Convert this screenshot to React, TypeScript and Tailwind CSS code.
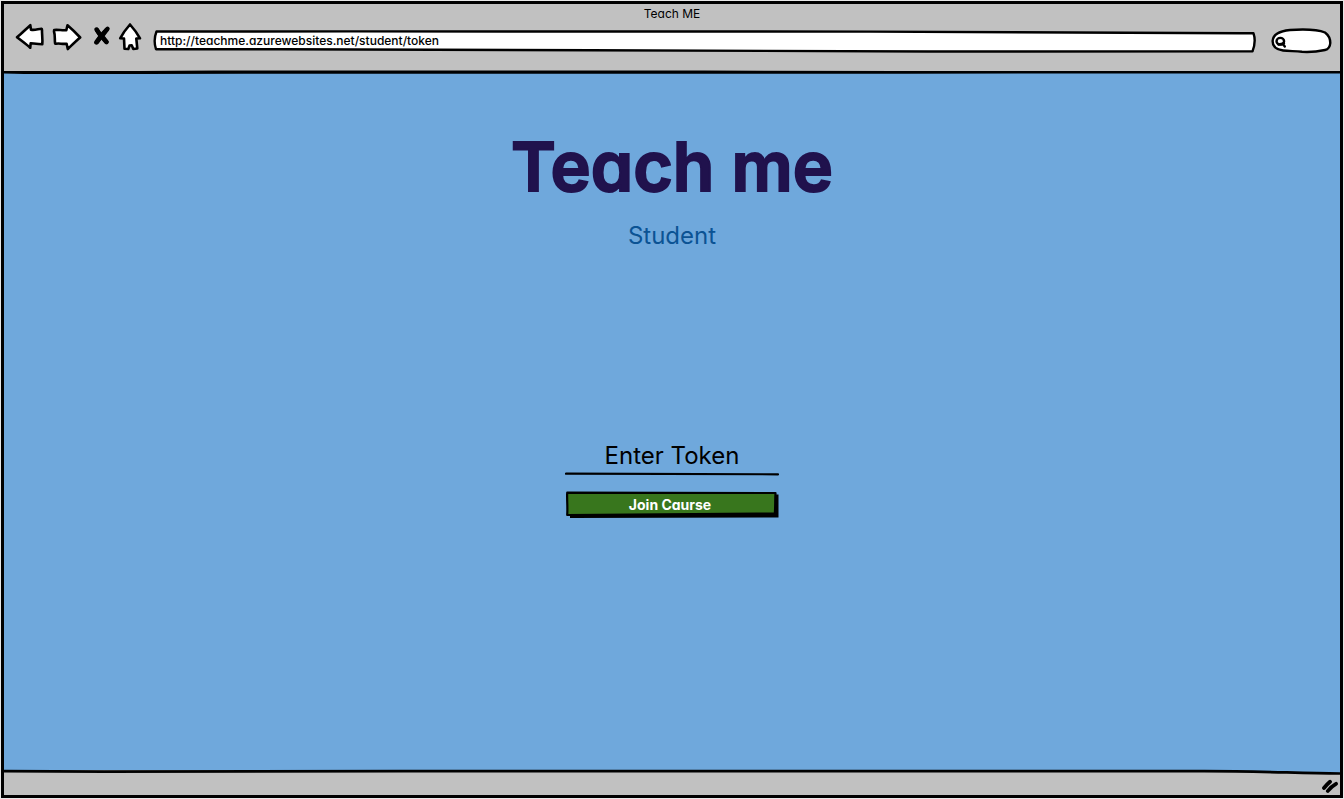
import { useState } from "react";
import type { ReactNode } from "react";

type NavButtonProps = {
  label: string;
  viewBox: string;
  className: string;
  children: ReactNode;
};

function NavButton({ label, viewBox, className, children }: NavButtonProps) {
  return (
    <button type="button" aria-label={label} className={`h-8 shrink-0 cursor-pointer ${className}`}>
      <svg
        viewBox={viewBox}
        className="block size-full"
        fill="#fff"
        stroke="#000"
        strokeWidth="2.6"
        strokeLinejoin="round"
        strokeLinecap="round"
        aria-hidden="true"
      >
        {children}
      </svg>
    </button>
  );
}

function BrowserBar() {
  const [url, setUrl] = useState("http://teachme.azurewebsites.net/student/token");
  return (
    <header className="bg-[#c1c1c1]">
      <p className="h-[18px] text-center text-xs leading-5">Teach ME</p>
      <div className="flex items-start pr-1.5 pl-2.5">
        <nav aria-label="Browser" className="flex">
          <NavButton label="Back" viewBox="14 22 32 32" className="w-8">
            <path d="M17 37.2C21 34 26 29 30.3 25.2L31 29.7C35 30.4 38 29 41.4 28.8Q42 29 42 30C41.8 34 42.8 39 42.3 44.2C38 44 34 43.5 30.7 43.2L30.2 47.8C26 44 21 40.5 17 37.2Z" />
          </NavButton>
          <NavButton label="Forward" viewBox="46 22 40 32" className="w-10">
            <path d="M54.2 30C58 29.5 62 30.6 66.3 30.2L67.500 25.200C72 29 76 33 80.200 37.500C76 41 72 45 67.800 49L66.600 43.800C62 44.300 59 43 56 43.800Q55 43.800 55 42.500C54.600 39 55.200 35 54 31.500Z" />
          </NavButton>
          <NavButton label="Stop" viewBox="86 22 28 32" className="w-7">
            <path d="M96.500 29.500C99 34 102 38 106.500 42M107.500 28.800C103 33 99 38 96.200 42.500" fill="none" strokeWidth="4.400" />
            <path d="M97 30C98.500 33 100.500 35 102 36C100 38 98 40.500 97 42M106.500 30C105 32 103.500 34.500 102 36C103.500 38 105 40.500 106.500 42" fill="none" strokeWidth="4.400" />
          </NavButton>
          <NavButton label="Home" viewBox="114 22 32 32" className="w-8">
            <path d="M130 24.500C134 29 137 33 140 38.300L136.300 38.500L137.300 48.500L133.300 49L131.700 45.300L129.500 45.600L128.300 49L124.500 48.700L124 38.500L120.200 38.300C123 33 126 29 130 24.500Z" />
          </NavButton>
        </nav>
        <form className="flex min-w-0 flex-1 gap-3" onSubmit={(event) => event.preventDefault()}>
          <label className="relative ml-1.5 block h-8 min-w-0 flex-1">
            <svg
              viewBox="0 0 1108 32"
              preserveAspectRatio="none"
              className="absolute inset-0 size-full"
              fill="#fff"
              stroke="#000"
              strokeWidth="2.4"
              strokeLinejoin="round"
              aria-hidden="true"
            >
              <path d="M4.500 9.500C250 9 520 10 720 9.600C900 11 1000 11 1103.500 11.300C1105.500 17 1104.500 24 1102.500 29.400C900 29.800 640 29.500 440 28.300C300 28 150 26.800 4 27.200C2 21 2.300 15 4.500 9.500Z" />
            </svg>
            <input
              type="text"
              aria-label="Address"
              value={url}
              onChange={(event) => setUrl(event.target.value)}
              className="relative mt-[11px] block h-4 w-full bg-transparent px-2 text-xs leading-4 font-medium outline-none"
            />
          </label>
          <label className="relative block h-8 w-16 shrink-0">
            <svg
              viewBox="1270 22 64 32"
              className="absolute inset-0 size-full"
              fill="#fff"
              stroke="#000"
              strokeWidth="2.4"
              strokeLinejoin="round"
              strokeLinecap="round"
              aria-hidden="true"
            >
              <path d="M1272.600 41C1273 34 1280 31 1290 30C1302 29.200 1318 29.700 1325 32.500C1329 35.500 1330.300 39 1330.300 43C1330 47 1329 49.200 1325 50C1318 51.500 1310 52.300 1302 51.800C1295 51 1289 51.300 1283 50.500C1276 49.500 1272.500 46 1272.600 41Z" />
              <ellipse cx="1280.300" cy="41.200" rx="3.800" ry="3.300" />
              <path d="M1282.500 43.500L1284.800 46.500M1278.500 44.500L1284 43.500" />
            </svg>
            <input
              type="search"
              aria-label="Search"
              className="relative mt-[11px] ml-4 block h-4 w-10 bg-transparent text-xs outline-none"
            />
          </label>
        </form>
      </div>
      <div className="h-4" />
      <svg viewBox="0 0 1336 4" preserveAspectRatio="none" className="block h-1 w-full bg-[#6fa8dc]" aria-hidden="true">
        <path d="M0 0H1336V3.500H1030L900 3.800H240L140 4H20L0 3.600Z" />
        <path d="M0 0H1336V0.900H900L700 0.600H210L130 1H0Z" fill="#c1c1c1" />
      </svg>
    </header>
  );
}

function JoinForm() {
  const [token, setToken] = useState("");
  return (
    <form className="mt-[188px] w-[214px]" onSubmit={(event) => event.preventDefault()}>
      <input
        type="text"
        aria-label="Token"
        value={token}
        onChange={(event) => setToken(event.target.value)}
        placeholder="Enter Token"
        className="block h-8 w-full bg-transparent text-center text-2xl leading-8 outline-none placeholder:text-black placeholder:opacity-100"
      />
      <svg viewBox="0 0 214 4" preserveAspectRatio="none" className="block h-1 w-full" aria-hidden="true">
        <path d="M1 1.700C60 1.200 130 2.500 213 2.300" fill="none" stroke="#000" strokeWidth="2.2" strokeLinecap="round" />
      </svg>
      <button type="submit" className="relative mt-[15px] block h-[27px] w-full cursor-pointer text-sm font-bold text-white">
        <svg viewBox="0 0 214 27" preserveAspectRatio="none" className="absolute inset-0 size-full" aria-hidden="true">
          <path d="M5 4L213.500 3.500V26.500L5 27Z" />
          <path
            d="M2.200 1.700C70 1.300 140 2.500 210.500 2C210 9 210.500 15 209.800 22.500C140 22.800 70 23.800 2.200 24C2.800 16 1.800 9 2.200 1.700Z"
            fill="#38761d"
            stroke="#000"
            strokeWidth="2.2"
            strokeLinejoin="round"
          />
        </svg>
        <span className="relative block pr-1 leading-[25px]">Join Caurse</span>
      </button>
    </form>
  );
}

export default function App() {
  return (
    <div className="flex min-h-screen bg-[#e8e8e8] p-px font-['Inter','Lato',sans-serif] text-black [font-feature-settings:'cv11']">
      <div className="flex w-full flex-col border-[3px] border-black bg-[#6fa8dc]">
        <BrowserBar />
        <main className="flex flex-1 flex-col items-center">
          <h1 className="mt-12 text-[68px] leading-[88px] font-semibold text-[#20124d] [-webkit-text-stroke:2px_#20124d]">
            Teach me
          </h1>
          <p className="mt-2.5 text-2xl leading-8 text-[#0b5394]">Student</p>
          <JoinForm />
        </main>
        <footer className="bg-[#c1c1c1]">
          <svg viewBox="0 0 1336 6" preserveAspectRatio="none" className="block h-1.5 w-full" aria-hidden="true">
            <path d="M0 0H1336V4L1250 2L1180 1H0Z" fill="#6fa8dc" />
            <path d="M0 2.200L100 2.700L400 2.100H1200C1260 2.400 1290 4 1336 4.500" fill="none" stroke="#000" strokeWidth="2.7" />
          </svg>
          <div className="flex h-5 justify-end pr-0.5">
            <svg
              viewBox="1320 775 18 20"
              className="h-5 w-[18px]"
              fill="none"
              stroke="#000"
              strokeWidth="3.8"
              strokeLinecap="round"
              aria-hidden="true"
            >
              <path d="M1324 788C1326 785.500 1328 783.500 1330 781.800M1327.800 791C1330 788 1333 785.500 1336 783.800" />
            </svg>
          </div>
        </footer>
      </div>
    </div>
  );
}
